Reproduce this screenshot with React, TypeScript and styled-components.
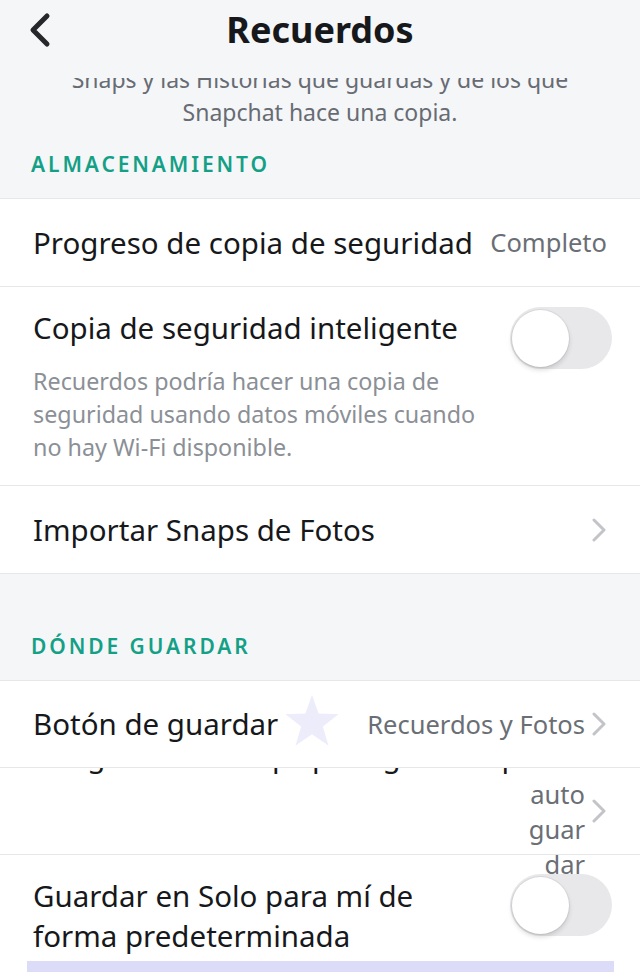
import React from 'react';
import styled, {createGlobalStyle} from 'styled-components';

const GlobalStyle = createGlobalStyle`
    html, body {
        margin: 0;
        padding: 0;
        background: #f5f6f8;
    }
    body {
        font-family: "Noto Sans", "Liberation Sans", sans-serif;
        -webkit-font-smoothing: antialiased;
    }
`;

const Screen = styled.div`
    width: 640px;
    height: 972px;
    overflow: hidden;
    background: #f5f6f8;
    display: flex;
    flex-direction: column;
`;

const Header = styled.header`
    position: relative;
    z-index: 2;
    height: 78px;
    flex-shrink: 0;
    background: #f5f6f8;
    display: flex;
    justify-content: center;
    padding-top: 6px;
    box-sizing: border-box;
`;

const BackButton = styled.button`
    position: absolute;
    left: 22px;
    top: 6px;
    width: 40px;
    height: 48px;
    padding: 0;
    border: none;
    background: none;
    display: flex;
    align-items: center;
    justify-content: center;
`;

const Title = styled.h1`
    margin: 0;
    font-size: 36px;
    line-height: 48px;
    font-weight: 700;
    color: #16181b;
`;

const Intro = styled.p`
    margin: -15px 0 0;
    padding: 0 40px;
    font-size: 23px;
    line-height: 33px;
    text-align: center;
    color: #676b73;
`;

const SectionLabel = styled.h2<{$top: number}>`
    margin: 0;
    padding: ${(p) => p.$top}px 31px 20px;
    font-size: 21px;
    line-height: 28px;
    font-weight: 600;
    letter-spacing: 2.9px;
    color: #13a086;
`;

const Group = styled.div`
    background: #fff;
    border-top: 1px solid #e6e7e9;
`;

const Row = styled.div<{$height: number}>`
    position: relative;
    display: flex;
    align-items: center;
    gap: 16px;
    height: ${(p) => p.$height}px;
    padding: 0 33px;
    border-bottom: 1px solid #e6e7e9;
    box-sizing: border-box;
`;

const TallRow = styled.div`
    display: flex;
    flex-direction: column;
    padding: 20px 28px 21px 33px;
    border-bottom: 1px solid #e6e7e9;
`;

const RowHead = styled.div`
    display: flex;
    align-items: flex-start;
    justify-content: space-between;
    gap: 24px;
`;

const Label = styled.span<{$max?: number}>`
    flex: 1;
    max-width: ${(p) => (p.$max ? `${p.$max}px` : 'none')};
    font-size: 29.5px;
    line-height: 40px;
    color: #16181b;
`;

const HeadLabel = styled(Label)`
    margin-top: 1px;
`;

const SoloLabel = styled(Label)`
    margin-top: 2px;
`;

const ClippedLabel = styled.div`
    flex: 1;
    align-self: stretch;
    overflow: hidden;
    span {
        display: block;
        margin-top: -32px;
        font-size: 29.5px;
        line-height: 40px;
        color: #16181b;
        white-space: nowrap;
    }
`;

const Value = styled.span`
    font-size: 25.5px;
    line-height: 35px;
    color: #6a6e75;
    white-space: nowrap;
`;

const WrappedValue = styled.span`
    align-self: flex-start;
    margin-top: 9px;
    width: 62px;
    font-size: 25.5px;
    line-height: 35px;
    color: #6a6e75;
    text-align: right;
`;

const Description = styled.p`
    margin: -4px 0 0;
    max-width: 466px;
    font-size: 23.3px;
    line-height: 33px;
    color: #8b8f96;
`;

const ToggleTrack = styled.div<{$on?: boolean}>`
    flex-shrink: 0;
    width: 102px;
    height: 62px;
    border-radius: 31px;
    background: ${(p) => (p.$on ? '#13a086' : '#e8e8eb')};
    display: flex;
    align-items: center;
    justify-content: ${(p) => (p.$on ? 'flex-end' : 'flex-start')};
    padding: 0 2px;
    box-sizing: border-box;
`;

const Knob = styled.div`
    width: 57px;
    height: 57px;
    border-radius: 50%;
    background: #fff;
    box-shadow: 0 0 0 1px rgba(0, 0, 0, 0.06), 0 3px 5px rgba(0, 0, 0, 0.14);
`;

const ChevronWrap = styled.span`
    display: flex;
    margin-left: -10px;
    margin-right: 0;
`;

const Star = styled.svg`
    position: absolute;
    left: 284px;
    top: 13px;
    pointer-events: none;
`;

const SoloRow = styled.div`
    display: flex;
    align-items: flex-start;
    justify-content: space-between;
    padding: 19px 28px 5px 33px;
`;

const Highlight = styled.div`
    margin-left: 27px;
    width: 587px;
    height: 12px;
    background: #dcdcf8;
`;

const Chevron = () => (
    <ChevronWrap>
        <svg width="16" height="24" viewBox="0 0 16 24">
            <path d="M3 2 L13 12 L3 22" fill="none" stroke="#c3c4c8" strokeWidth="3" strokeLinecap="round" strokeLinejoin="round" />
        </svg>
    </ChevronWrap>
);

const Toggle = ({on}: {on?: boolean}) => (
    <ToggleTrack $on={on}>
        <Knob />
    </ToggleTrack>
);

const App = () => {
    return (
        <Screen>
            <GlobalStyle />
            <Header>
                <BackButton aria-label="Atrás">
                    <svg width="30" height="40" viewBox="0 0 30 40">
                        <path d="M20 6 L6 20 L20 34" fill="none" stroke="#25272b" strokeWidth="5" strokeLinecap="round" strokeLinejoin="round" />
                    </svg>
                </BackButton>
                <Title>Recuerdos</Title>
            </Header>

            <Intro>Snaps y las Historias que guardas y de los que Snapchat hace una copia.</Intro>

            <SectionLabel $top={21}>ALMACENAMIENTO</SectionLabel>
            <Group>
                <Row $height={88}>
                    <Label>Progreso de copia de seguridad</Label>
                    <Value>Completo</Value>
                </Row>
                <TallRow>
                    <RowHead>
                        <HeadLabel>Copia de seguridad inteligente</HeadLabel>
                        <Toggle />
                    </RowHead>
                    <Description>
                        Recuerdos podría hacer una copia de seguridad usando datos móviles cuando no hay Wi-Fi disponible.
                    </Description>
                </TallRow>
                <Row $height={88}>
                    <Label>Importar Snaps de Fotos</Label>
                    <Chevron />
                </Row>
            </Group>

            <SectionLabel $top={58}>DÓNDE GUARDAR</SectionLabel>
            <Group>
                <Row $height={87}>
                    <Label>Botón de guardar</Label>
                    <Value>Recuerdos y Fotos</Value>
                    <Chevron />
                    <Star width="56" height="54" viewBox="0 0 56 54">
                        <path d="M28 1 L34.6 19.6 L54.5 20.2 L38.8 32.4 L44.4 51.5 L28 40.3 L11.6 51.5 L17.2 32.4 L1.5 20.2 L21.4 19.6 Z" fill="#ececfb" />
                    </Star>
                </Row>
                <Row $height={87}>
                    <ClippedLabel>
                        <span>Imágenes de Snaps para guardar por defecto</span>
                    </ClippedLabel>
                    <WrappedValue>auto<wbr />guar<wbr />dar</WrappedValue>
                    <Chevron />
                </Row>
                <SoloRow>
                    <SoloLabel $max={420}>Guardar en Solo para mí de forma predeterminada</SoloLabel>
                    <Toggle />
                </SoloRow>
                <Highlight />
            </Group>
        </Screen>
    );
};

export default App;
